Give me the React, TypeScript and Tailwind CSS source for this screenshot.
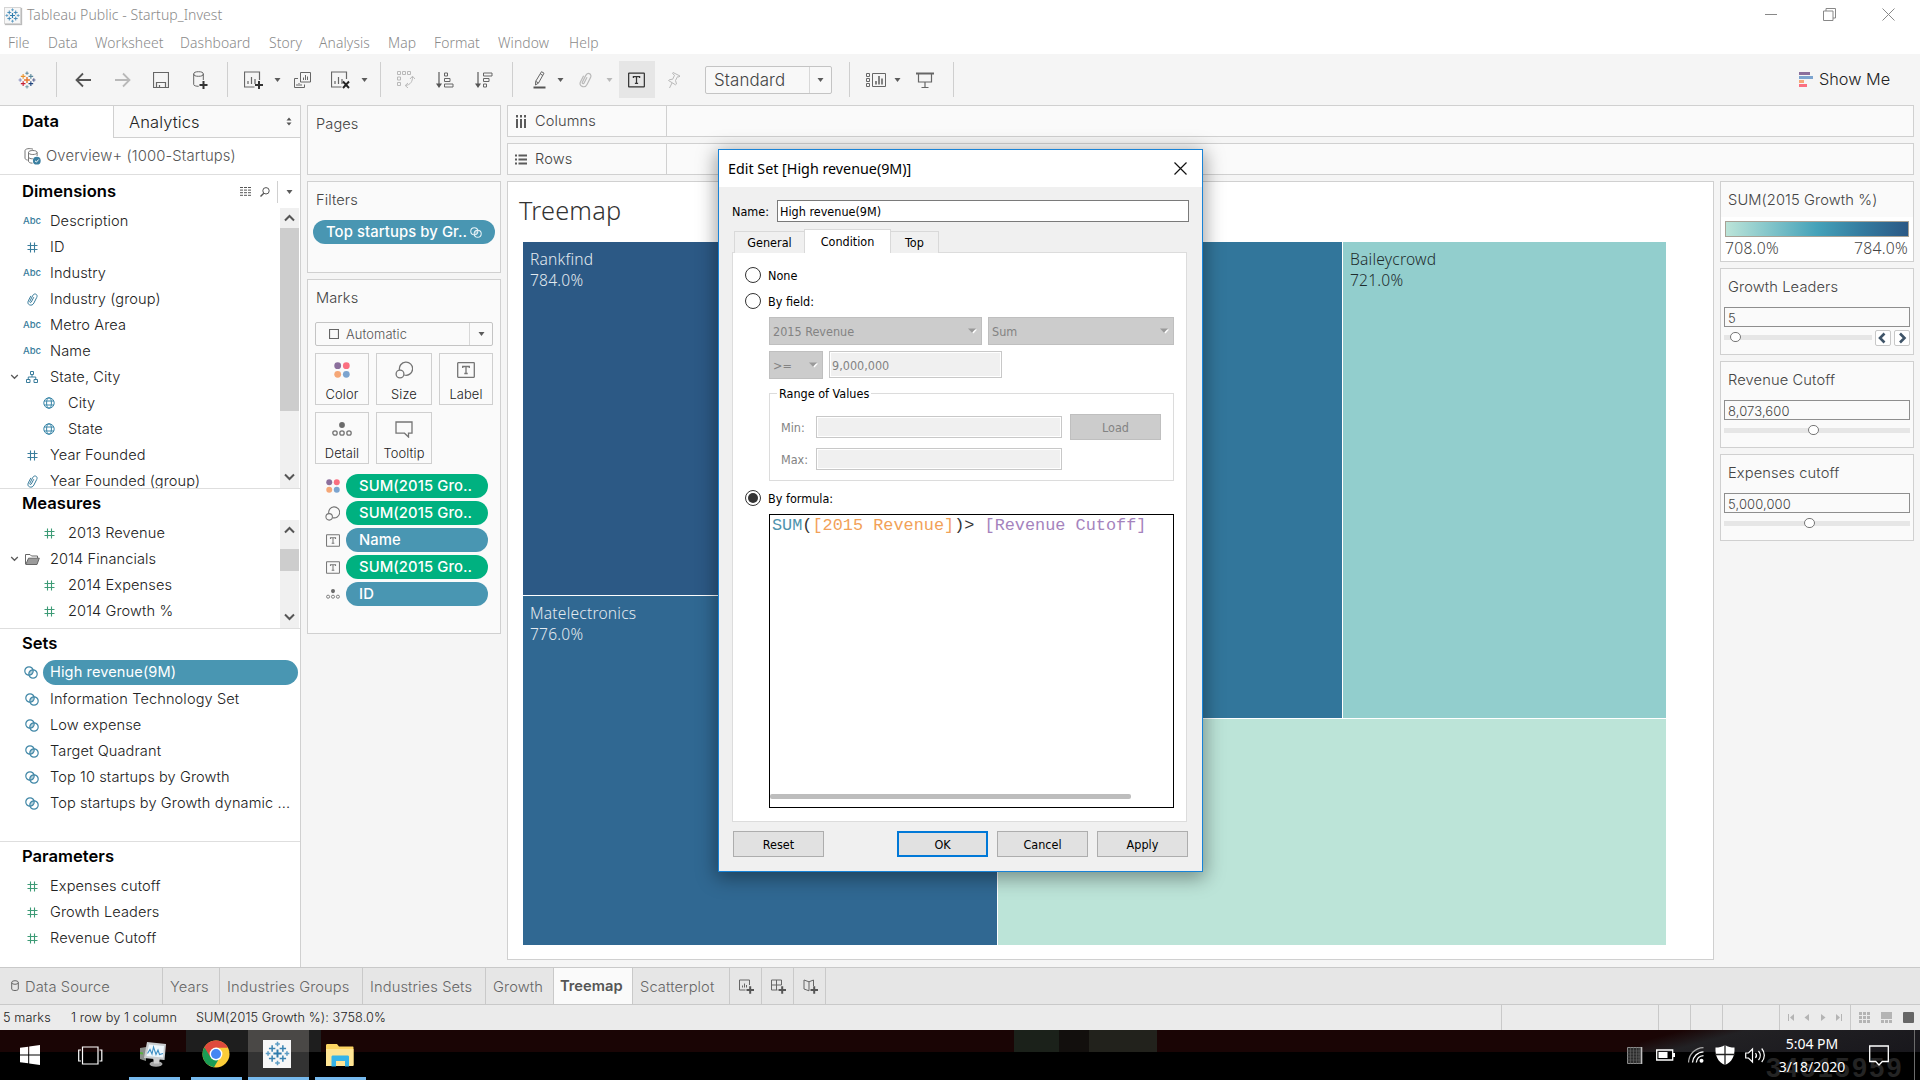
import React from "react";

type Cls = { className?: string };

/* ---------- shared icon helpers ---------- */

function Svg({ w, h, children, className = "" }: { w: number; h: number; children: React.ReactNode; className?: string }) {
  return (
    <svg width={w} height={h} viewBox={`0 0 ${w} ${h}`} fill="none" className={`shrink-0 ${className}`}>
      {children}
    </svg>
  );
}

function Caret({ className = "", color = "#5b5b5b" }: Cls & { color?: string }) {
  return (
    <Svg w={7} h={4} className={className}>
      <path d="M0.500 0h6L3.500 4z" fill={color} />
    </Svg>
  );
}

function TableauMark({ size, colors, className = "" }: { size: number; colors: string[]; className?: string }) {
  const marks: [number, number, number, number][] = [
    [14, 14, 4.6, 0],
    [8, 8.3, 3.6, 1],
    [20, 8.3, 3.6, 2],
    [8, 19.7, 3.6, 3],
    [20, 19.7, 3.6, 4],
    [14, 3.4, 2.6, 5],
    [14, 24.6, 2.6, 6],
    [3.4, 14, 2.6, 7],
    [24.6, 14, 2.6, 8],
  ];
  return (
    <svg width={size} height={size} viewBox="0 0 28 28" className={`shrink-0 ${className}`}>
      {marks.map(([x, y, r, c], i) => (
        <path key={i} d={`M${x - r} ${y}h${2 * r}M${x} ${y - r}v${2 * r}`} stroke={colors[c]} strokeWidth={i === 0 ? 2.2 : 1.7} />
      ))}
    </svg>
  );
}

const BLUE_MARK = ["#2f7cad", "#3b84b2", "#3b84b2", "#3b84b2", "#3b84b2", "#5c9cc4", "#5c9cc4", "#5c9cc4", "#5c9cc4"];
const COLOR_MARK = ["#e8762c", "#eb9129", "#59879b", "#c72035", "#1f447e", "#5b879b", "#7199a6", "#8a8fc0", "#5b6591"];

function Venn({ color = "#3f86a6", className = "", w = 14 }: { color?: string; className?: string; w?: number }) {
  return (
    <svg width={w} height={w - 1} viewBox="0 0 14 13" fill="none" className={`shrink-0 ${className}`}>
      <circle cx="5" cy="5" r="4.200" stroke={color} strokeWidth="1.200" />
      <circle cx="9" cy="8" r="4.200" stroke={color} strokeWidth="1.200" />
      <path d="M5.200 9.200C4.600 6.500 6 4.200 8.800 3.800 9.400 6.500 8 8.800 5.200 9.200z" fill={color} opacity="0.400" />
    </svg>
  );
}

function Hash({ color }: { color: string }) {
  return (
    <Svg w={11} h={11}>
      <path d="M0.500 3.500h10M0.500 7.500h10M3.500 0.500v10M7.500 0.500v10" stroke={color} strokeWidth="1.100" />
    </Svg>
  );
}

function Clip({ color, w = 11, h = 13 }: { color: string; w?: number; h?: number }) {
  return (
    <svg width={w} height={h} viewBox="0 0 11 13" fill="none" className="shrink-0">
      <path
        d="M6.800 4.200 4.300 9c-.5 1.100-1.900.4-1.500-.6L5.600 2.800C6.300 1.400 7.400.6 8.700 1.100c1.500.6 1.700 2 1 3.400L6.900 10c-.9 1.900-2.600 2.600-4.300 1.900C.9 11.200.5 9.600 1.300 7.900L3.900 2.900"
        stroke={color}
        strokeWidth="1"
      />
    </svg>
  );
}

function Abc() {
  return <span className="text-[9.500px] font-medium leading-none tracking-normal text-[#3a7d9c]">Abc</span>;
}

function Globe() {
  return (
    <Svg w={12} h={12}>
      <circle cx="6" cy="6" r="5.200" stroke="#3a86a8" />
      <ellipse cx="6" cy="6" rx="2.400" ry="5.200" stroke="#3a86a8" />
      <path d="M1 4h10M1 8h10" stroke="#3a86a8" />
    </Svg>
  );
}

function Hierarchy() {
  return (
    <Svg w={12} h={12}>
      <path d="M4.500 0.500h3v3h-3zM0.500 8.500h3.500v3H0.500zM8 8.500h3.500v3H8zM6 3.500V6M2.250 8.500V6h7.500v2.500" stroke="#3a7d9c" />
    </Svg>
  );
}

function Folder() {
  return (
    <Svg w={15} h={11}>
      <path d="M0.500 10V0.500H5l1.500 1.500H12.500V4" stroke="#666" />
      <path d="M0.800 10.500 3.500 4.200H14.300L12 10.500z" fill="#9b9b9b" stroke="#666" />
    </Svg>
  );
}

function Chevron() {
  return (
    <Svg w={9} h={6}>
      <path d="M1.200 1 4.500 4.300 7.800 1" stroke="#5b5b5b" strokeWidth="1.300" />
    </Svg>
  );
}

function ScrollArrow({ up = false }: { up?: boolean }) {
  return (
    <Svg w={11} h={8}>
      <path d={up ? "M1 6.500 5.500 2 10 6.500" : "M1 1.500 5.500 6 10 1.500"} stroke="#555" strokeWidth="2" />
    </Svg>
  );
}

/* Dots, size, text and detail glyphs shared by the marks buttons and the pills */
function ColorDots({ s = 16 }: { s?: number }) {
  return (
    <svg width={s} height={s} viewBox="0 0 16 16" className="shrink-0">
      <circle cx="3.700" cy="3.700" r="3.400" fill="#8b6f9c" />
      <circle cx="12.300" cy="3.700" r="3.400" fill="#fb6f80" />
      <circle cx="3.700" cy="12.300" r="3.400" fill="#f5a777" />
      <circle cx="12.300" cy="12.300" r="3.400" fill="#7ca4cf" />
    </svg>
  );
}

function SizeGlyph({ s = 18 }: { s?: number }) {
  return (
    <svg width={s} height={s} viewBox="0 0 18 18" fill="none" className="shrink-0">
      <path d="M4.600 9.200A6.600 6.600 0 1 1 9.200 14" stroke="#757575" strokeWidth="1.300" />
      <circle cx="5" cy="13" r="3.900" stroke="#757575" strokeWidth="1.300" />
    </svg>
  );
}

function TextGlyph({ w = 18, h = 16, dark = false }: { w?: number; h?: number; dark?: boolean }) {
  const c = dark ? "#333" : "#757575";
  return (
    <svg width={w} height={h} viewBox="0 0 18 16" fill="none" className="shrink-0">
      <rect x="0.700" y="0.700" width="16.600" height="14.600" rx="0.500" stroke={c} strokeWidth="1.300" />
      <path d="M5.700 6V4.500h6.600V6M9 4.500v7M7.300 11.500h3.400" stroke={c} strokeWidth="1.300" />
    </svg>
  );
}

function DetailGlyph({ w = 20 }: { w?: number }) {
  return (
    <svg width={w} height={w * 0.7} viewBox="0 0 20 14" fill="none" className="shrink-0">
      <circle cx="10" cy="3" r="2.900" fill="#6b6b6b" />
      <circle cx="3" cy="11" r="2.200" stroke="#757575" strokeWidth="1.300" />
      <circle cx="10" cy="11" r="2.200" stroke="#757575" strokeWidth="1.300" />
      <circle cx="17" cy="11" r="2.200" stroke="#757575" strokeWidth="1.300" />
    </svg>
  );
}

/* ---------- window chrome ---------- */

function TitleBar() {
  return (
    <div className="flex h-[30px] items-center bg-white font-['Noto_Sans',sans-serif]">
      <div className="ml-[4px] flex h-[17px] w-[17px] items-center justify-center border border-[#d5d5d5] bg-[#f7f7f7] shadow-[1px_1px_1px_#bbb]">
        <TableauMark size={15} colors={BLUE_MARK} />
      </div>
      <span className="ml-[6px] w-[210px] whitespace-nowrap pb-[2px] text-[14px] tracking-[0.050px] text-[#8a8a8a]">Tableau Public - Startup_Invest</span>
      <div className="ml-auto mr-[25px] flex items-center gap-[46px] pb-[2px]">
        <Svg w={12} h={12}>
          <path d="M0 6.500h12" stroke="#888" />
        </Svg>
        <Svg w={13} h={13}>
          <path d="M0.500 3h9.500v9.500H0.500zM3 3V0.500h9.500V10H10" stroke="#888" />
        </Svg>
        <Svg w={13} h={13}>
          <path d="M0.500 0.500l12 12M12.500 0.500l-12 12" stroke="#888" />
        </Svg>
      </div>
    </div>
  );
}

const MENUS: [string, string][] = [
  ["File", "w-[40px]"],
  ["Data", "w-[47px]"],
  ["Worksheet", "w-[85px]"],
  ["Dashboard", "w-[89px]"],
  ["Story", "w-[50px]"],
  ["Analysis", "w-[69px]"],
  ["Map", "w-[46px]"],
  ["Format", "w-[64px]"],
  ["Window", "w-[71px]"],
  ["Help", "w-[50px]"],
];

function MenuBar() {
  return (
    <div className="flex h-[24px] items-center bg-white pl-[8px] pt-[1px] font-['Noto_Sans',sans-serif] text-[13.900px] leading-[20px] text-[#8a8a8a]">
      {MENUS.map(([m, w]) => (
        <span key={m} className={`shrink-0 ${w}`}>
          {m}
        </span>
      ))}
    </div>
  );
}

function Sep({ className = "" }: Cls) {
  return <div className={`h-[35px] w-px shrink-0 bg-[#cfcfcf] ${className}`} />;
}

function Toolbar() {
  const g = "#666";
  const l = "#b9b9b9";
  return (
    <div className="flex h-[51px] items-center bg-[#f5f5f5]">
      <TableauMark size={18} colors={COLOR_MARK} className="ml-[18px]" />
      <Sep className="ml-[20px]" />
      <Svg w={17} h={16} className="ml-[18px]">
        <path d="M16 8H1.500M8 1.500 1.500 8 8 14.500" stroke="#555" strokeWidth="1.800" />
      </Svg>
      <Svg w={17} h={16} className="ml-[22px]">
        <path d="M1 8h14.500M9 1.500 15.500 8 9 14.500" stroke={l} strokeWidth="1.800" />
      </Svg>
      <Svg w={16} h={16} className="ml-[22px]">
        <path d="M0.500 0.500h15v15H0.500zM3.500 15.500v-5h9v5M6.500 15.500V13" stroke={g} strokeWidth="1.200" />
      </Svg>
      <Svg w={16} h={18} className="ml-[24px]">
        <ellipse cx="5.500" cy="3" rx="4.800" ry="2.300" stroke={g} />
        <path d="M0.700 3v10.500c0 1.200 2.500 1.800 5 1.800M10.300 3v6" stroke={g} />
        <path d="M6.500 14h8M10.500 10v8" stroke="#333" strokeWidth="2" />
      </Svg>
      <Sep className="ml-[18px]" />
      <Svg w={19} h={18} className="ml-[16px]">
        <path d="M15.500 9V1H0.500v15h10M4 13v-3M7.500 13V6M11 13V8" stroke={g} strokeWidth="1.200" />
        <path d="M11 14h8M15 10v8" stroke="#333" strokeWidth="2" />
      </Svg>
      <Caret className="ml-[11px]" />
      <Svg w={17} h={16} className="ml-[13px]">
        <path d="M6.500 0.500h10v9.500h-10zM9.500 8V5.500M11.500 8V3M13.500 8V4.500M4 6.500H0.500v9h10V12.500M3 14v-2M5 14v-3M7 14v-2" stroke={g} />
      </Svg>
      <Svg w={19} h={18} className="ml-[20px]">
        <path d="M15.500 8V1H0.500v15h10M4 13v-3M7.500 13V6M11 13V8" stroke={g} strokeWidth="1.200" />
        <path d="M12 10.500l6 6.500M18 10.500l-6 6.500" stroke="#222" strokeWidth="1.900" />
      </Svg>
      <Caret className="ml-[11px]" />
      <Sep className="ml-[12px]" />
      <Svg w={18} h={17} className="ml-[16px]">
        <path d="M0.500 0.500h3v3h-3zM5.500 0.500h3v3h-3zM10.500 0.500h3v3h-3zM0.500 6h3v3h-3zM0.500 11.500h3v3h-3zM15.500 5.500c.2 5-2 8.300-7 9M13 8l2.500-2.800L18 8M11 12l-2.800 2.500L11 17" stroke={l} />
      </Svg>
      <Svg w={18} h={16} className="ml-[21px]">
        <path d="M3 0v13" stroke={g} strokeWidth="1.300" />
        <path d="M0 11.500h6L3 16z" fill="#555" />
        <path d="M8.500 1h3v3h-3zM8.500 6.500H14v3H8.500zM8.500 12h8.500v3H8.500z" stroke={g} />
      </Svg>
      <Svg w={18} h={16} className="ml-[21px]">
        <path d="M3 0v13" stroke={g} strokeWidth="1.300" />
        <path d="M0 11.500h6L3 16z" fill="#555" />
        <path d="M8.500 1H17v3H8.500zM8.500 6.500H14v3H8.500zM8.500 12h3v3h-3z" stroke={g} />
      </Svg>
      <Sep className="ml-[19px]" />
      <Svg w={13} h={18} className="ml-[20px]">
        <path d="M8.500 0.700 11 2.200 5.500 12 2.500 14 2.700 10.300zM2.700 10.300 5.500 12M7.500 3 9.800 4.500" stroke={g} />
        <path d="M0.500 16.500h12" stroke="#555" strokeWidth="2" />
      </Svg>
      <Caret className="ml-[11px]" />
      <div className="ml-[15px] flex w-[13px]">
        <Clip color={l} w={13} h={16} />
      </div>
      <Caret className="ml-[14px]" color={l} />
      <div className="ml-[6px] flex h-[37px] w-[36px] items-center justify-center bg-[#e6e6e6] pr-[1px]">
        <TextGlyph w={17} h={16} dark />
      </div>
      <Svg w={14} h={18} className="ml-[12px]">
        <path d="M6 1.500 13 5l-1 1-1.500-.3L8.500 9.500l1 3.500-1 .8L1.500 9.500 2.500 8.700l3.200-.5L7.500 4.300 5.500 2.500zM5 12 2.500 17" stroke={l} />
      </Svg>
      <div className="ml-[24px] flex h-[28px] w-[127px] items-center rounded-[2px] border border-[#c4c4c4] bg-[#f8f8f8]">
        <span className="w-[103px] pl-[8px] text-[16.900px] leading-[26px] text-[#444]">Standard</span>
        <div className="flex h-full flex-1 items-center justify-center border-l border-[#d8d8d8]">
          <Caret />
        </div>
      </div>
      <Sep className="ml-[17px]" />
      <Svg w={20} h={14} className="ml-[16px]">
        <path d="M0.500 0.500h3v3h-3zM0.500 5.500h3v3h-3zM0.500 10.500h3v3h-3zM6.500 0.500h13v13h-13z" stroke={g} />
        <path d="M10 11.500V8M13 11.500V3M16 11.500V5.500" stroke={g} strokeWidth="1.600" />
      </Svg>
      <Caret className="ml-[8px]" />
      <Svg w={18} h={16} className="ml-[15px]">
        <path d="M0 1.500h18" stroke={g} strokeWidth="2" />
        <path d="M2.500 1.500v8.500h13V1.500M9 10v5M5.500 15.500h7" stroke={g} strokeWidth="1.200" />
      </Svg>
      <Sep className="ml-[19px]" />
      <Svg w={14} h={15} className="ml-auto">
        <path d="M0 1.500h11" stroke="#8b6f9c" strokeWidth="3" />
        <path d="M0 5.500h14" stroke="#7ca4cf" strokeWidth="3" />
        <path d="M0 9.500h5" stroke="#f5a777" strokeWidth="3" />
        <path d="M0 13.500h8" stroke="#fb6f80" strokeWidth="3" />
      </Svg>
      <span className="ml-[6px] mr-[26px] w-[75px] whitespace-nowrap text-[16.300px] tracking-normal text-[#222]">Show Me</span>
    </div>
  );
}

/* ---------- data pane ---------- */

type Field = { icon: React.ReactNode; label: string; nested?: boolean; open?: boolean };

function FieldRow({ icon, label, nested, open }: Field) {
  return (
    <div className={`flex h-[26px] shrink-0 items-center ${nested ? "pl-[41px]" : open ? "pl-[10px]" : "pl-[24px]"}`}>
      {open && (
        <span className="mr-[5px] flex w-[9px]">
          <Chevron />
        </span>
      )}
      <span className="flex w-[16px] items-center justify-center">{icon}</span>
      <span className={`whitespace-nowrap text-[14.600px] leading-[26px] text-[#222] ${nested ? "ml-[11px]" : "ml-[10px]"}`}>{label}</span>
    </div>
  );
}

function PaneHeading({ children }: { children: React.ReactNode }) {
  return <span className="mb-[2px] pl-[22px] text-[16.600px] font-semibold leading-[28px] tracking-normal text-black">{children}</span>;
}

const B = "#3a7d9c";
const G = "#3d9b76";

const DIMENSIONS: Field[] = [
  { icon: <Abc />, label: "Description" },
  { icon: <Hash color={B} />, label: "ID" },
  { icon: <Abc />, label: "Industry" },
  { icon: <Clip color={B} />, label: "Industry (group)" },
  { icon: <Abc />, label: "Metro Area" },
  { icon: <Abc />, label: "Name" },
  { icon: <Hierarchy />, label: "State, City", open: true },
  { icon: <Globe />, label: "City", nested: true },
  { icon: <Globe />, label: "State", nested: true },
  { icon: <Hash color={B} />, label: "Year Founded" },
  { icon: <Clip color={B} />, label: "Year Founded (group)" },
];

const MEASURES: Field[] = [
  { icon: <Hash color={G} />, label: "2013 Revenue", nested: true },
  { icon: <Folder />, label: "2014 Financials", open: true },
  { icon: <Hash color={G} />, label: "2014 Expenses", nested: true },
  { icon: <Hash color={G} />, label: "2014 Growth %", nested: true },
];

const SETS = ["Information Technology Set", "Low expense", "Target Quadrant", "Top 10 startups by Growth", "Top startups by Growth dynamic ..."];

function DataPane() {
  return (
    <div className="flex w-[301px] shrink-0 flex-col border-r border-t border-[#d0d0d0] bg-white">
      <div className="flex h-[32px]">
        <div className="flex w-[113px] items-center pb-[2px] pl-[22px] text-[16.600px] font-semibold tracking-normal text-black">Data</div>
        <div className="flex flex-1 items-center justify-between border-b border-l border-[#d0d0d0] bg-[#fafafa] pl-[15px] pr-[8px] pt-[1px] text-[16.500px] text-[#222]">
          <span>Analytics</span>
          <Svg w={6} h={9} className="mb-[2px]">
            <path d="M0.500 3.500 3 0.500 5.500 3.500zM0.500 5.500 3 8.500 5.500 5.500z" fill="#555" />
          </Svg>
        </div>
      </div>
      <div className="flex h-[37px] items-center border-b border-[#dedede] pl-[24px]">
        <Svg w={17} h={17}>
          <path d="M9 1.200C6 0 1 .6 1 2.600v7.600c0 1 1.300 1.700 2.700 1.900M4.500 4.500c0-1.300 2-2 4.300-2s4.300.7 4.300 2-2 2-4.300 2-4.300-.7-4.300-2zM4.500 4.500v8.700c0 1 1.500 2 4 2M4.500 9c0 1.200 2 1.800 4.300 1.800M13.100 4.500V8" stroke="#777" />
          <circle cx="12.800" cy="12.700" r="3.900" fill="#3a7fa0" />
          <path d="M11 12.800l1.400 1.300 2.300-2.600" stroke="#fff" />
        </Svg>
        <span className="ml-[5px] whitespace-nowrap text-[14.800px] tracking-[0.130px] text-[#555]">Overview+ (1000-Startups)</span>
      </div>

      <div className="flex h-[314px] flex-col border-b border-[#dedede]">
        <div className="flex h-[33px] shrink-0 items-center">
          <PaneHeading>Dimensions</PaneHeading>
          <Svg w={12} h={9} className="ml-auto">
            <path d="M0 0.500h12M0 3.100h12M0 5.700h12M0 8.300h12" stroke="#555" strokeDasharray="3 1" />
          </Svg>
          <Svg w={10} h={10} className="ml-[8px]">
            <circle cx="6" cy="3.800" r="3.200" stroke="#555" />
            <path d="M3.800 6.200 0.500 9.500" stroke="#555" strokeWidth="1.400" />
          </Svg>
          <div className="ml-[7px] h-[22px] w-px bg-[#d0d0d0]" />
          <Caret className="ml-[8px] mr-[7px]" />
        </div>
        <div className="flex min-h-0 flex-1 overflow-hidden">
          <div className="flex flex-1 flex-col overflow-hidden">
            {DIMENSIONS.map((f) => (
              <FieldRow key={f.label} {...f} />
            ))}
          </div>
          <div className="mr-[1px] flex w-[19px] flex-col items-center bg-[#f0f0f0]">
            <div className="flex h-[20px] items-center">
              <ScrollArrow up />
            </div>
            <div className="h-[183px] w-full bg-[#cdcdcd]" />
            <div className="mt-auto flex h-[23px] items-center">
              <ScrollArrow />
            </div>
          </div>
        </div>
      </div>

      <div className="flex h-[140px] flex-col border-b border-[#dedede]">
        <div className="flex h-[31px] shrink-0 items-start">
          <PaneHeading>Measures</PaneHeading>
        </div>
        <div className="flex min-h-0 flex-1">
          <div className="flex flex-1 flex-col">
            {MEASURES.map((f) => (
              <FieldRow key={f.label} {...f} />
            ))}
          </div>
          <div className="mr-[1px] flex w-[19px] flex-col items-center bg-[#f0f0f0]">
            <div className="flex h-[20px] items-center">
              <ScrollArrow up />
            </div>
            <div className="mt-[9px] h-[22px] w-full bg-[#cdcdcd]" />
            <div className="mt-auto flex h-[23px] items-center">
              <ScrollArrow />
            </div>
          </div>
        </div>
      </div>

      <div className="flex h-[213px] flex-col border-b border-[#dedede]">
        <PaneHeading>Sets</PaneHeading>
        <div className="flex h-[27px] items-center pb-[1px] pl-[24px]">
          <Venn />
          <div className="ml-[5px] mr-[2px] flex h-[25px] flex-1 items-center rounded-full bg-[#4996b2] pl-[7px] pt-[1px] text-[14.600px] font-normal text-white">High revenue(9M)</div>
        </div>
        {SETS.map((s) => (
          <FieldRow key={s} icon={<Venn className="mr-[1px]" />} label={s} />
        ))}
      </div>

      <div className="flex flex-1 flex-col">
        <PaneHeading>Parameters</PaneHeading>
        <div className="flex flex-col pt-[1px]">
          {["Expenses cutoff", "Growth Leaders", "Revenue Cutoff"].map((p) => (
            <FieldRow key={p} icon={<Hash color={G} />} label={p} />
          ))}
        </div>
      </div>
    </div>
  );
}

/* ---------- shelves and marks card ---------- */

function MarkButton({ icon, label }: { icon: React.ReactNode; label: string }) {
  return (
    <div className="flex h-[52px] flex-col items-center border border-[#cfcfcf] bg-[#fafafa]">
      <div className="mt-[5px] flex h-[22px] items-center">{icon}</div>
      <span className="mt-[5px] text-[12.900px] leading-[17px] text-[#222]">{label}</span>
    </div>
  );
}

const PILLS: { icon: React.ReactNode; label: string; green?: boolean }[] = [
  { icon: <ColorDots s={14} />, label: "SUM(2015 Gro..", green: true },
  { icon: <SizeGlyph s={15} />, label: "SUM(2015 Gro..", green: true },
  { icon: <TextGlyph w={14} h={13} />, label: "Name" },
  { icon: <TextGlyph w={14} h={13} />, label: "SUM(2015 Gro..", green: true },
  { icon: <DetailGlyph w={14} />, label: "ID" },
];

function CardsColumn() {
  return (
    <div className="flex w-[194px] shrink-0 flex-col gap-[6px] text-[#444]">
      <div className="h-[70px] border border-[#d0d0d0] bg-[#fafafa] pl-[8px] pt-[8px] text-[14.600px] leading-[20px]">Pages</div>
      <div className="h-[92px] border border-[#d0d0d0] bg-[#fafafa] pt-[8px]">
        <div className="pl-[8px] text-[14.600px] leading-[20px]">Filters</div>
        <div className="ml-[5px] mt-[10px] flex h-[24px] w-[182px] items-center rounded-full bg-[#4996b2] pl-[13px] pt-[1px] text-[14.800px] font-[550] text-white">
          <span className="w-[144px] whitespace-nowrap">Top startups by Gr..</span>
          <Venn color="#e8f3f7" w={12} />
        </div>
      </div>
      <div className="h-[355px] border border-[#d0d0d0] bg-[#fafafa] pt-[8px]">
        <div className="pl-[8px] text-[14.600px] leading-[20px]">Marks</div>
        <div className="ml-[7px] mt-[14px] flex h-[24px] w-[178px] items-center rounded-[2px] border border-[#c4c4c4]">
          <Svg w={10} h={10} className="ml-[13px]">
            <path d="M0.500 0.500h9v9h-9z" stroke="#666" strokeWidth="1.200" />
          </Svg>
          <span className="ml-[7px] pt-[1px] text-[12.900px] text-[#555]">Automatic</span>
          <div className="ml-auto flex h-full w-[23px] items-center justify-center border-l border-[#d8d8d8]">
            <Caret />
          </div>
        </div>
        <div className="ml-[7px] mt-[7px] grid w-[178px] grid-cols-[54px_56px_54px] gap-[7px]">
          <MarkButton icon={<ColorDots />} label="Color" />
          <MarkButton icon={<SizeGlyph />} label="Size" />
          <MarkButton icon={<TextGlyph />} label="Label" />
          <MarkButton icon={<DetailGlyph />} label="Detail" />
          <MarkButton
            label="Tooltip"
            icon={
              <Svg w={18} h={17}>
                <path d="M1 1h16v11.200h-3.500V16L9.500 12.200H1z" stroke="#757575" strokeWidth="1.300" />
              </Svg>
            }
          />
        </div>
        <div className="ml-[17px] mt-[10px] flex flex-col gap-[3px]">
          {PILLS.map((p, i) => (
            <div key={i} className="flex h-[24px] items-center">
              <span className="flex w-[15px] items-center justify-center">{p.icon}</span>
              <div
                className={`ml-[6px] flex h-[24px] w-[142px] items-center rounded-full pl-[13px] pt-[1px] text-[14.800px] font-[550] text-white ${p.green ? "bg-[#00b180]" : "bg-[#4996b2]"}`}
              >
                {p.label}
              </div>
            </div>
          ))}
        </div>
      </div>
    </div>
  );
}

function Shelf({ label, icon }: { label: string; icon: React.ReactNode }) {
  return (
    <div className="flex h-[32px] shrink-0 border border-[#d0d0d0] bg-[#fafafa]">
      <div className="flex w-[159px] items-center border-r border-[#d0d0d0] pl-[7px] text-[14.600px] text-[#444]">
        <span className="w-[20px]">{icon}</span>
        <span className="pt-[2px]">{label}</span>
      </div>
    </div>
  );
}

/* ---------- treemap ---------- */

function Tile({ name, value, className }: { name?: string; value?: string; className: string }) {
  return (
    <div className={`pl-[7px] pt-[7px] text-[15.600px] leading-[21px] tracking-[0.200px] ${className}`}>
      {name && <div>{name}</div>}
      {value && <div>{value}</div>}
    </div>
  );
}

function Worksheet() {
  return (
    <div className="flex w-[1207px] shrink-0 flex-col border border-[#d0d0d0] bg-white pl-[15px] font-['Noto_Sans',sans-serif]">
      <div className="-ml-[4px] h-[60px] pt-[8px] text-[25.300px] font-light leading-[40px] tracking-[0.200px] text-[#333]">Treemap</div>
      <div className="flex h-[703px] w-[1143px] gap-px">
        <div className="flex w-[474px] flex-col gap-px">
          <Tile name="Rankfind" value="784.0%" className="h-[353px] bg-[#2c5985] text-[#e3eaf0]" />
          <Tile name="Matelectronics" value="776.0%" className="flex-1 bg-[#306892] text-[#e3eaf0]" />
        </div>
        <div className="flex flex-1 flex-col gap-px">
          <div className="flex h-[476px] gap-px">
            <Tile className="w-[344px] bg-[#32769b]" />
            <Tile name="Baileycrowd" value="721.0%" className="flex-1 bg-[#92cecd] text-[#1f2d2d]" />
          </div>
          <Tile className="flex-1 bg-[#bce4d8]" />
        </div>
      </div>
    </div>
  );
}

/* ---------- right-hand controls ---------- */

function Thumb({ className }: { className: string }) {
  return <div className={`absolute -top-[3px] h-[10px] w-[11px] rounded-[5px] border border-[#777] bg-white ${className}`} />;
}

function ParamCard({ title, value, thumb, arrows }: { title: string; value: string; thumb: string; arrows?: boolean }) {
  return (
    <div className="flex h-[87px] shrink-0 flex-col border border-[#d0d0d0] bg-[#fafafa] px-[3px]">
      <div className="pl-[4px] pt-[8px] text-[14.700px] leading-[20px] text-[#444]">{title}</div>
      <div className="mt-[10px] h-[20px] border border-[#8e8e8e] bg-[#fafafa] pl-[3px] text-[13px] leading-[20px] text-[#444]">{value}</div>
      <div className="flex h-[20px] items-center gap-[3px] pt-[1px]">
        <div className="relative h-[5px] flex-1 bg-[#e6e6e6]">
          <Thumb className={thumb} />
        </div>
        {arrows &&
          ["M8.500 2.500 4 7l4.500 4.500", "M5 2.500 9.500 7 5 11.500"].map((d) => (
            <div key={d} className="flex h-[16px] w-[16px] items-center justify-center rounded-[2px] border border-[#c8c8c8] bg-white">
              <Svg w={14} h={14}>
                <path d={d} stroke="#3f5468" strokeWidth="2.600" />
              </Svg>
            </div>
          ))}
      </div>
    </div>
  );
}

function RightCards() {
  return (
    <div className="flex w-[194px] shrink-0 flex-col gap-[6px]">
      <div className="h-[81px] border border-[#d0d0d0] bg-white">
        <div className="h-[35px] bg-[#fafafa] pl-[7px] pt-[8px] text-[14.700px] leading-[20px] text-[#444]">SUM(2015 Growth %)</div>
        <div className="mx-[4px] mt-[4px] h-[16px] border border-[#a8a296] bg-[linear-gradient(90deg,#bce4d8_0%,#8ccacc_20%,#45a2b9_50%,#347b9f_75%,#2c5985_100%)]" />
        <div className="flex justify-between pl-[4px] pr-[5px] pt-[1px] font-['Noto_Sans',sans-serif] text-[15.700px] leading-[21px] tracking-[0.250px] text-[#444]">
          <span>708.0%</span>
          <span>784.0%</span>
        </div>
      </div>
      <ParamCard title="Growth Leaders" value="5" thumb="left-[6px]" arrows />
      <ParamCard title="Revenue Cutoff" value="8,073,600" thumb="left-[84px]" />
      <ParamCard title="Expenses cutoff" value="5,000,000" thumb="left-[80px]" />
    </div>
  );
}

/* ---------- dialog ---------- */

function Radio({ label, on, className = "" }: { label: string; on?: boolean; className?: string }) {
  return (
    <div className={`flex h-[16px] items-center ${className}`}>
      <div className="flex h-[16px] w-[16px] items-center justify-center rounded-full border border-[#333] bg-white">
        {on && <div className="h-[10px] w-[10px] rounded-full bg-[#333]" />}
      </div>
      <span className="ml-[7px] pt-[2px]">{label}</span>
    </div>
  );
}

function DisabledSelect({ label, className }: { label: string; className: string }) {
  return (
    <div className={`flex h-[28px] items-center justify-between border border-[#bfbfbf] bg-[#cccccc] pl-[3px] pr-[4px] text-[#838383] ${className}`}>
      <span className="pt-[2px]">{label}</span>
      <Svg w={9} h={6}>
        <path d="M1.500 1.500H9L5.500 5.500z" fill="#fff" />
        <path d="M0 0.500h8L4 4.800z" fill="#999" />
      </Svg>
    </div>
  );
}

function DisabledInput({ value = "", className }: { value?: string; className: string }) {
  return <div className={`flex items-center border border-[#c8c8c8] bg-[#f0f0f0] pl-[2px] pt-[3px] text-[#838383] shadow-[inset_0_0_0_1px_#fff] ${className}`}>{value}</div>;
}

function DialogButton({ label, className = "" }: { label: string; className?: string }) {
  return <div className={`flex h-[26px] w-[91px] items-center justify-center bg-[#e1e1e1] pt-[2px] ${className}`}>{label}</div>;
}

function EditSetDialog() {
  return (
    <div className="absolute left-[718px] top-[149px] flex h-[723px] w-[485px] flex-col border border-[#1883d7] bg-[#f0f0f0] font-['DejaVu_Sans_Condensed',sans-serif] text-[12.500px] tracking-normal text-black shadow-[0_4px_18px_2px_rgba(0,0,0,0.38)]">
      <div className="flex h-[37px] shrink-0 items-center justify-between bg-white pl-[9px] pr-[15px] font-['Noto_Sans',sans-serif] text-[14.300px] font-normal">
        Edit Set [High revenue(9M)]
        <Svg w={13} h={13}>
          <path d="M0.500 0.500l12 12M12.500 0.500l-12 12" stroke="#111" strokeWidth="1.200" />
        </Svg>
      </div>
      <div className="mt-[13px] flex h-[22px] shrink-0 items-center pl-[13px]">
        <span className="w-[45px] pt-[2px]">Name:</span>
        <div className="flex h-[22px] w-[412px] items-center border border-[#7a7a7a] bg-white pl-[2px] pt-[2px]">High revenue(9M)</div>
      </div>
      <div className="relative z-10 mt-[7px] flex h-[24px] shrink-0 items-end pl-[15px]">
        <div className="flex h-[22px] w-[71px] items-center justify-center border border-b-0 border-[#d9d9d9] bg-[#f0f0f0] pt-[2px]">General</div>
        <div className="-ml-px flex h-[24px] w-[87px] items-center justify-center border border-b-0 border-[#d9d9d9] bg-white pt-[2px]">Condition</div>
        <div className="flex h-[22px] w-[48px] items-center justify-center border border-b-0 border-l-0 border-[#d9d9d9] bg-[#f0f0f0] pt-[2px]">Top</div>
      </div>
      <div className="-mt-px ml-[13px] h-[570px] w-[455px] shrink-0 border border-[#dcdcdc] bg-white">
        <Radio label="None" className="ml-[12px] mt-[14px]" />
        <Radio label="By field:" className="ml-[12px] mt-[10px]" />
        <div className="ml-[36px] mt-[8px] flex gap-[6px]">
          <DisabledSelect label="2015 Revenue" className="w-[213px]" />
          <DisabledSelect label="Sum" className="w-[186px]" />
        </div>
        <div className="ml-[36px] mt-[6px] flex gap-[6px]">
          <DisabledSelect label=">=" className="w-[54px]" />
          <DisabledInput value="9,000,000" className="h-[27px] w-[173px]" />
        </div>
        <fieldset className="ml-[36px] mt-[5px] h-[97px] w-[405px] border border-[#dcdcdc]">
          <legend className="ml-[7px] px-[2px] pt-[1px] leading-[18px]">Range of Values</legend>
          <div className="mt-[11px] flex items-center pl-[11px] text-[#838383]">
            <span className="w-[35px] pt-[2px]">Min:</span>
            <DisabledInput className="h-[22px] w-[246px]" />
            <div className="ml-[8px] flex h-[26px] w-[91px] items-center justify-center border border-[#bfbfbf] bg-[#cccccc] pt-[2px]">Load</div>
          </div>
          <div className="mt-[8px] flex items-center pl-[11px] text-[#838383]">
            <span className="w-[35px] pt-[2px]">Max:</span>
            <DisabledInput className="h-[22px] w-[246px]" />
          </div>
        </fieldset>
        <Radio label="By formula:" on className="ml-[12px] mt-[9px]" />
        <div className="ml-[36px] mt-[8px] flex h-[294px] w-[405px] flex-col border border-black bg-white">
          <div className="whitespace-pre pl-[2px] font-['Liberation_Mono',monospace] text-[16.860px] leading-[21px]">
            <span className="text-[#4f93ad]">SUM</span>
            <span className="text-[#333]">(</span>
            <span className="text-[#f2a158]">[2015 Revenue]</span>
            <span className="text-[#333]">)&gt; </span>
            <span className="text-[#a583bd]">
              <b>[</b>Revenue Cutoff<b>]</b>
            </span>
          </div>
          <div className="mb-[8px] mt-auto h-[5px] w-[361px] rounded-[2px] bg-[#bdbdbd]" />
        </div>
      </div>
      <div className="mt-[9px] flex pl-[14px]">
        <DialogButton label="Reset" className="border border-[#adadad]" />
        <DialogButton label="OK" className="ml-[73px] border-2 border-[#0078d7]" />
        <DialogButton label="Cancel" className="ml-[9px] border border-[#adadad]" />
        <DialogButton label="Apply" className="ml-[9px] border border-[#adadad]" />
      </div>
    </div>
  );
}

/* ---------- sheet tabs and status bar ---------- */

const TABS: [string, string, boolean?][] = [
  ["Years", "w-[57px]"],
  ["Industries Groups", "w-[143px]"],
  ["Industries Sets", "w-[123px]"],
  ["Growth", "w-[68px]"],
  ["Treemap", "w-[79px]", true],
  ["Scatterplot", "w-[97px]"],
];

const NEW_TABS = [
  "M10.500 6V1H0.500v10h6M3.500 8.500v-2M5.500 8.500v-4M7.500 8.500V6",
  "M10.500 6V1H0.500v10h6M5.500 1v10M0.500 6h10",
  "M10.500 7V1L6 2.800 1 1v9l5 1.800V2.800",
];

function SheetTabs() {
  return (
    <div className="flex h-[38px] shrink-0 border-b border-t border-[#c9c9c9] bg-[#e6e6e6] text-[14.700px] text-[#666]">
      <div className="flex w-[163px] items-center border-r border-[#c9c9c9] pl-[11px]">
        <Svg w={8} h={11} className="mb-[2px]">
          <ellipse cx="4" cy="2.500" rx="3.300" ry="1.800" stroke="#666" />
          <path d="M0.700 2.500v6.500c0 2 6.600 2 6.600 0V2.500" stroke="#666" />
        </Svg>
        <span className="ml-[6px] pt-[3px]">Data Source</span>
      </div>
      {TABS.map(([t, w, active]) => (
        <div
          key={t}
          className={`flex shrink-0 items-center whitespace-nowrap border-r border-[#c9c9c9] ${w} ${active ? "bg-[#fafafa] pl-[6px] pt-[1px] font-semibold tracking-normal text-[#555]" : "pl-[7px] pt-[3px]"}`}
        >
          {t}
        </div>
      ))}
      {NEW_TABS.map((d) => (
        <div key={d} className="flex w-[32px] items-center justify-center border-r border-[#c9c9c9]">
          <Svg w={15} h={15} className="ml-[2px]">
            <path d={d} stroke="#666" />
            <path d="M7.500 11h7.500M11.200 7.200v7.600" stroke="#555" strokeWidth="2" />
          </Svg>
        </div>
      ))}
    </div>
  );
}

function StatusBar() {
  const c = "#b4b4b4";
  return (
    <div className="flex h-[25px] shrink-0 items-center bg-[#ebebeb] pl-[3px] text-[12.700px] text-[#222]">
      <span className="w-[68px]">5 marks</span>
      <span className="w-[125px]">1 row by 1 column</span>
      <span>SUM(2015 Growth %): 3758.0%</span>
      <div className="ml-auto flex h-full border-l border-[#c9c9c9]">
        <div className="w-[157px] border-r border-[#c9c9c9]" />
        <div className="w-[32px] border-r border-[#c9c9c9]" />
        <div className="w-[32px] border-r border-[#c9c9c9]" />
        <div className="w-[57px] border-r border-[#c9c9c9]" />
        <div className="flex w-[71px] items-center gap-[10px] border-r border-[#c9c9c9] pl-[8px]">
          <Svg w={6} h={7}>
            <path d="M0.500 0v7" stroke={c} />
            <path d="M6 0v7L2 3.500z" fill={c} />
          </Svg>
          <Svg w={5} h={7}>
            <path d="M5 0v7L0.500 3.500z" fill={c} />
          </Svg>
          <Svg w={5} h={7} className="ml-[2px]">
            <path d="M0 0v7l4.500-3.500z" fill={c} />
          </Svg>
          <Svg w={6} h={7}>
            <path d="M5.500 0v7" stroke={c} />
            <path d="M0 0v7l4-3.500z" fill={c} />
          </Svg>
        </div>
        <div className="flex w-[69px] items-center gap-[11px] pb-[1px] pl-[8px]">
          <Svg w={11} h={11}>
            <path d="M0 1.500h11M0 5.500h11M0 9.500h11" stroke={c} strokeWidth="3" strokeDasharray="3 1" />
          </Svg>
          <Svg w={11} h={11}>
            <path d="M0 0h11v7H0z" fill={c} />
            <path d="M0 9.500h11" stroke={c} strokeWidth="3" strokeDasharray="3 1" />
          </Svg>
          <div className="h-[11px] w-[11px] rounded-[1px] bg-[#666]" />
        </div>
      </div>
    </div>
  );
}

/* ---------- taskbar ---------- */

function AppSlot({ className, children }: { className: string; children: React.ReactNode }) {
  return (
    <div className={`flex h-[50px] flex-col items-center ${className}`}>
      <div className="mr-[3px] flex h-[47px] items-center">{children}</div>
      <div className="h-[3px] w-full bg-[#76b9ed]" />
    </div>
  );
}

function Taskbar() {
  return (
    <div className="relative flex h-[50px] shrink-0 items-center overflow-hidden bg-[linear-gradient(180deg,#1a0505_0_22px,#000_22px)] font-['Noto_Sans',sans-serif] text-white">
      <div className="absolute left-[186px] top-0 h-[22px] w-[135px] bg-[#1e1e1e]" />
      <div className="absolute left-[1014px] top-0 h-[22px] w-[143px] bg-[linear-gradient(90deg,#1b211a_0_45px,#120f0d_45px_75px,#22221c_75px)]" />
      <div className="absolute left-[1640px] top-0 h-[22px] w-[280px] bg-[linear-gradient(165deg,#1a0505_0_12%,#222124_30%,#18171c_100%)]" />
      <span className="absolute left-[1766px] top-[26px] font-['Liberation_Sans',sans-serif] text-[27px] font-bold leading-[24px] tracking-[2.200px] text-[#242424]">34515959</span>
      <div className="relative flex h-full w-full items-center">
        <Svg w={20} h={20} className="ml-[20px]">
          <path d="M0 2.800 8.200 1.700V9.500H0zM9.200 1.500 20 0v9.500H9.200zM0 10.500h8.200v7.800L0 17.200zM9.200 10.500H20V20L9.200 18.500z" fill="#fff" />
        </Svg>
        <Svg w={25} h={19} className="ml-[38px]">
          <path d="M4.500 1h15.500v17H4.500zM3 4H0.700v11H3M21.500 4h2.300v11h-2.300" stroke="#fff" strokeWidth="1.200" />
        </Svg>
        <AppSlot className="ml-[26px] w-[51px]">
          <Svg w={28} h={28}>
            <path d="M1 8l6-1v14l-6-2z" fill="#8a8f8a" />
            <path d="M1 12l3 .5v2L1 14z" fill="#56b03d" />
            <ellipse cx="17" cy="24" rx="6.500" ry="2.800" fill="#a9a9a9" />
            <path d="M14 17.500h7l-1 6h-5z" fill="#cfcfcf" />
            <path d="M8 2l19 2-1.500 16L5 18z" fill="#c9cdcf" />
            <path d="M10 4.500l15 1.500-1 11.500L7.500 16z" fill="#eef7fc" />
            <path d="M8.500 13.500l2.500-4 2 4.500 1.500-7 2.500 7.500 2-4.500 1.500 4.500 3.500-1" stroke="#3d8fc4" strokeWidth="1.100" />
          </Svg>
        </AppSlot>
        <AppSlot className="ml-[11px] w-[51px]">
          <Svg w={28} h={28} className="ml-[2px]">
            <circle cx="14" cy="14" r="13.500" fill="#fccd38" />
            <path d="M14 14 2.300 7.250A13.500 13.500 0 0 0 12 27.350L18 17z" fill="#1a9c55" />
            <path d="M14 7.800H25.900A13.500 13.500 0 0 0 2.300 7.250L8.500 17z" fill="#df4a3c" />
            <circle cx="14" cy="14" r="6.400" fill="#fff" />
            <circle cx="14" cy="14" r="5" fill="#4586f3" />
          </Svg>
        </AppSlot>
        <AppSlot className="ml-[6px] w-[61px] bg-[linear-gradient(180deg,#4a4846_0_22px,#333_22px)]">
          <div className="flex h-[28px] w-[28px] items-center justify-center bg-[#f7f7f7]">
            <TableauMark size={25} colors={BLUE_MARK} />
          </div>
        </AppSlot>
        <AppSlot className="ml-[6px] w-[51px]">
          <Svg w={28} h={24} className="ml-[2px] mt-[2px]">
            <path d="M0 2.500C0 1.500.5 1 1.500 1H11l2 2.500h13.500c.8 0 1 .5 1 1V22H0z" fill="#fcd462" />
            <path d="M0 6h27.500v17H0z" fill="#ffe594" />
            <path d="M5.500 23.500V14c0-1 .5-1.500 1.500-1.500h14.500c1 0 1.500.5 1.500 1.500v9.500h-4V18h-9v5.500z" fill="#35b4e8" />
          </Svg>
        </AppSlot>

        <Svg w={16} h={17} className="ml-auto">
          <path d="M0.500 0.500h13.500v16H0.500z" fill="#2c2c2c" stroke="#8a8a8a" />
          <path d="M3.500 0v17M6.500 0v17M9.500 0v17M12 0v17M0 4h14M0 7h14M0 10h14M0 13h14" stroke="#666" strokeWidth="0.600" />
          <path d="M14.700 0v17" stroke="#ccc" strokeWidth="1.200" />
        </Svg>
        <Svg w={19} h={12} className="ml-[13px]">
          <path d="M0.700 1h16v10h-16z" stroke="#fff" strokeWidth="1.300" />
          <path d="M2.500 3h9v6h-9zM17 4h2v4h-2z" fill="#fff" />
        </Svg>
        <Svg w={16} h={16} className="ml-[13px]">
          <path d="M0.500 15.500C1 7 7 1 15.500 0.700" stroke="#aaa" strokeWidth="1.300" />
          <path d="M4.500 15.500C5 9.500 9.500 5 15.500 4.800" stroke="#fff" strokeWidth="1.300" />
          <path d="M8.300 15.500C8.800 11.500 11.500 9 15.500 8.700" stroke="#fff" strokeWidth="1.300" />
          <circle cx="13.500" cy="13.700" r="2" fill="#fff" />
        </Svg>
        <Svg w={20} h={20} className="ml-[11px]">
          <path d="M10 0c3 2 6 2.500 9.500 2.500C20 11 17 17 10 20 3 17 0 11 .5 2.500 4 2.500 7 2 10 0z" fill="#fff" />
          <path d="M10 0v20M0 9.500h20" stroke="#222" strokeWidth="1.300" />
        </Svg>
        <Svg w={21} h={17} className="ml-[10px]">
          <path d="M0.700 6h2.800L7.500 2v13l-4-4H0.700z" stroke="#fff" strokeWidth="1.200" />
          <path d="M10.500 6c1.200 1.500 1.200 3.500 0 5M13.500 4c2.200 2.700 2.200 6.300 0 9M16.700 1.500c3.500 4 3.500 9.500 0 13.500" stroke="#fff" strokeWidth="1.200" />
        </Svg>
        <div className="ml-[8px] flex w-[76px] flex-col items-center whitespace-nowrap text-[14px] font-normal leading-[23px] tracking-normal">
          <span>5:04 PM</span>
          <span>3/18/2020</span>
        </div>
        <Svg w={20} h={21} className="ml-[19px]">
          <path d="M0.700 1h18.600v15.500h-6L10 20l-3.300-3.500h-6z" stroke="#fff" strokeWidth="1.300" />
        </Svg>
        <div className="ml-[25px] mr-[5px] h-full w-px bg-[#6b6b6b]" />
      </div>
    </div>
  );
}

export default function App() {
  return (
    <div className="relative flex h-[1080px] w-[1920px] flex-col overflow-hidden bg-[#f5f5f5] font-['Inter',sans-serif] font-[340] tracking-[0.100px]">
      <TitleBar />
      <MenuBar />
      <Toolbar />
      <div className="flex h-[862px] shrink-0">
        <DataPane />
        <div className="w-[6px] shrink-0" />
        <CardsColumn />
        <div className="ml-[6px] flex w-[1407px] flex-col gap-[6px]">
          <Shelf
            label="Columns"
            icon={
              <Svg w={12} h={13}>
                <path d="M2 0v2.500M6 0v2.500M10 0v2.500M2 4v9M6 4v9M10 4v9" stroke="#5b5b5b" strokeWidth="2" />
              </Svg>
            }
          />
          <Shelf
            label="Rows"
            icon={
              <Svg w={12} h={11}>
                <path d="M0 1.500h2M0 5.500h2M0 9.500h2M3.500 1.500H12M3.500 5.500H12M3.500 9.500H12" stroke="#5b5b5b" strokeWidth="2" />
              </Svg>
            }
          />
          <div className="flex h-[779px] gap-[6px]">
            <Worksheet />
            <RightCards />
          </div>
        </div>
      </div>
      <SheetTabs />
      <StatusBar />
      <Taskbar />
      <EditSetDialog />
    </div>
  );
}
